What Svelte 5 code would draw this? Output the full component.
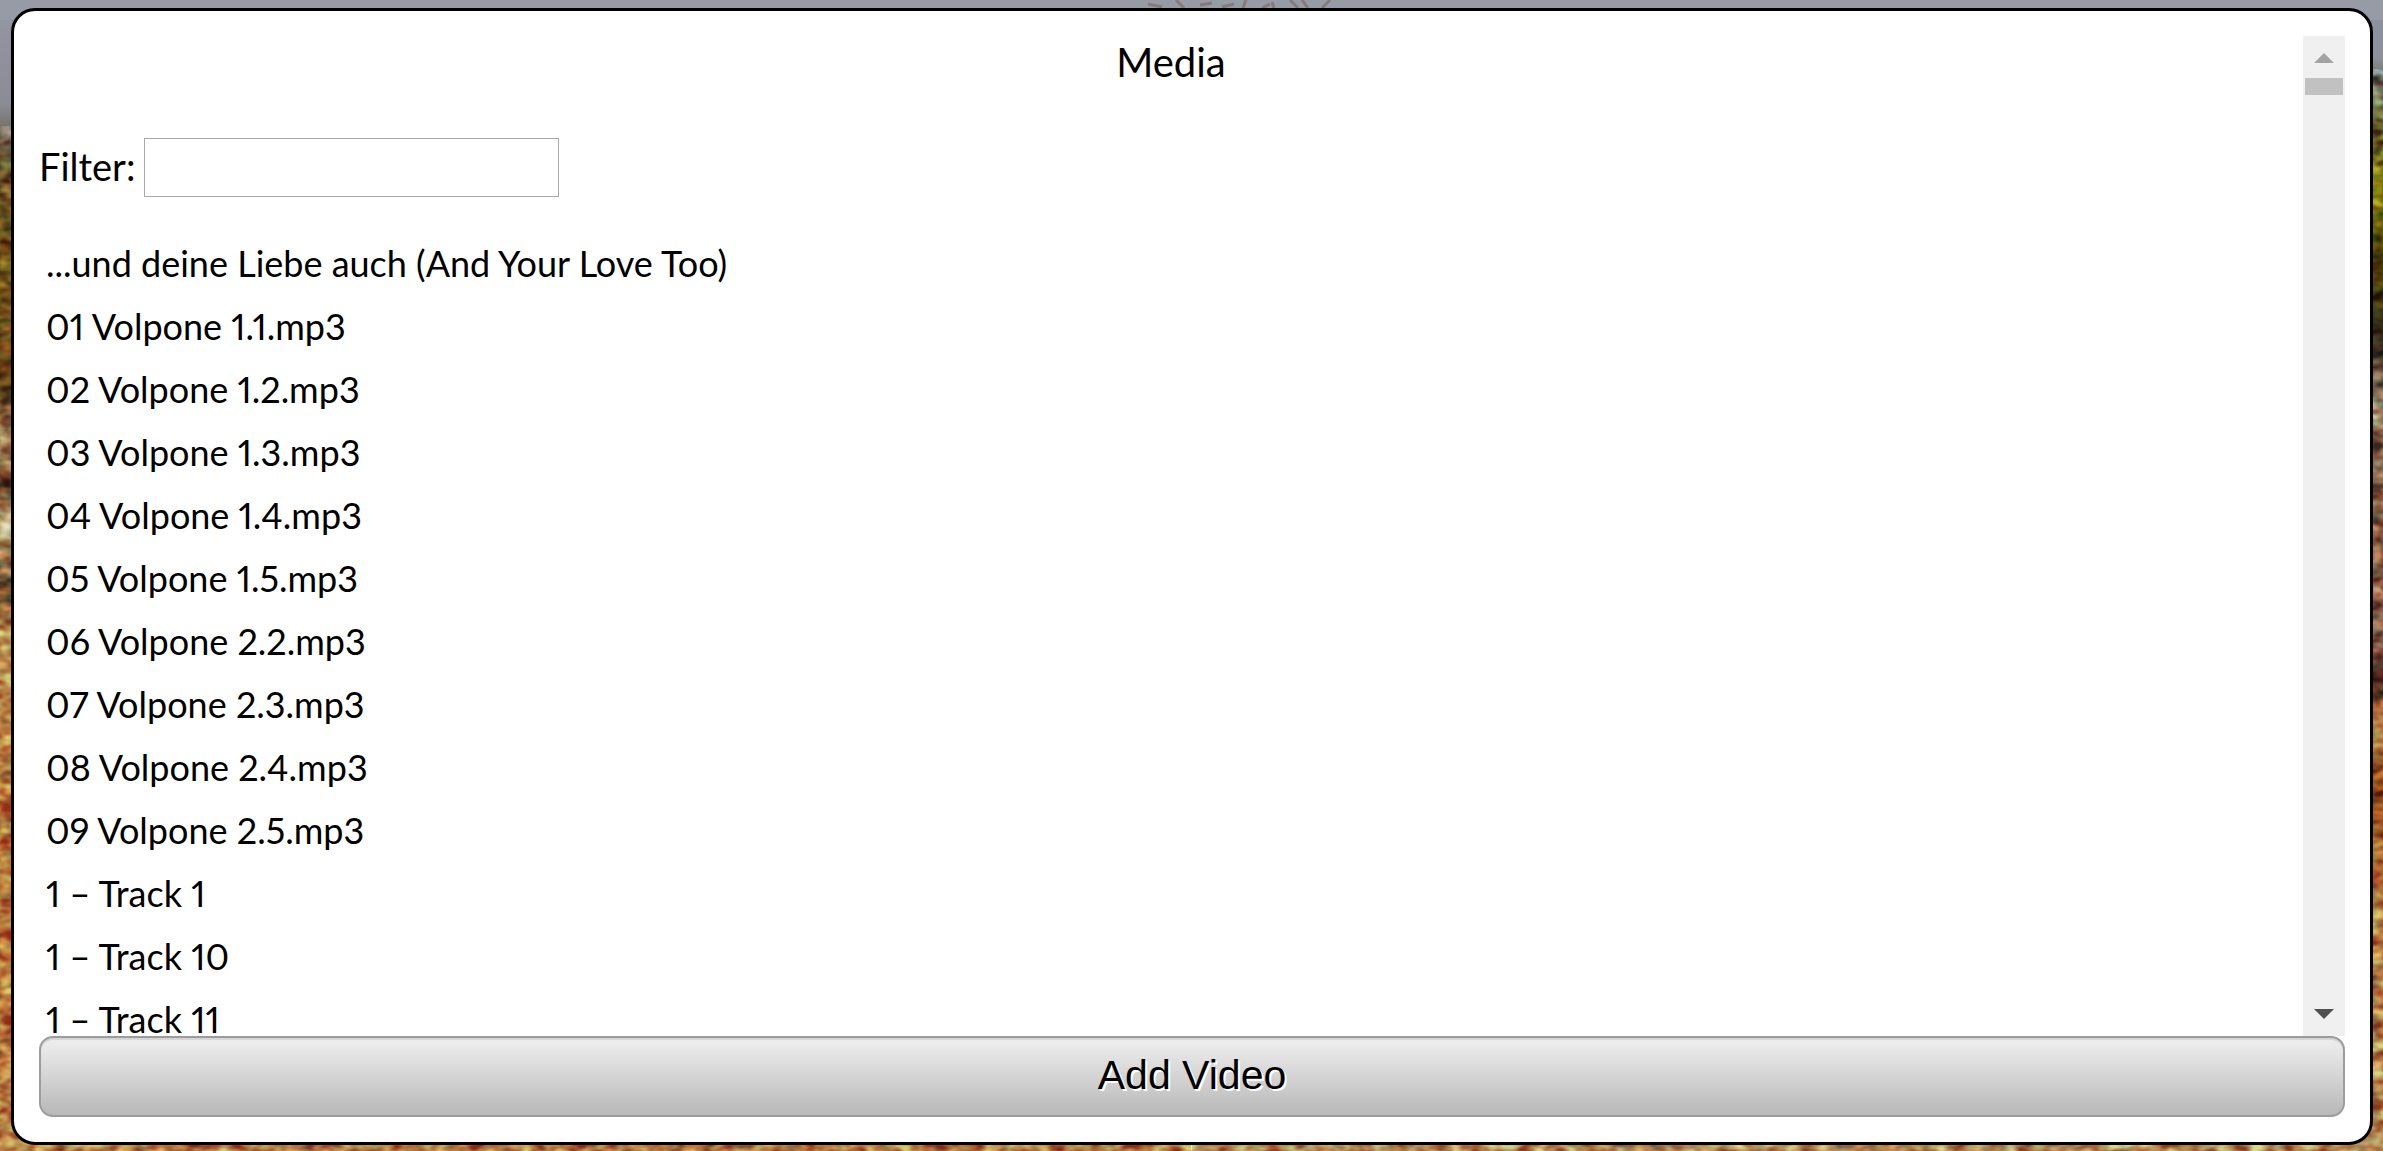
<script>
  const media = [
    '...und deine Liebe auch (And Your Love Too)',
    '01 Volpone 1.1.mp3',
    '02 Volpone 1.2.mp3',
    '03 Volpone 1.3.mp3',
    '04 Volpone 1.4.mp3',
    '05 Volpone 1.5.mp3',
    '06 Volpone 2.2.mp3',
    '07 Volpone 2.3.mp3',
    '08 Volpone 2.4.mp3',
    '09 Volpone 2.5.mp3',
    '1 – Track 1',
    '1 – Track 10',
    '1 – Track 11'
  ];

  let filter = $state('');
  let scroller;
  let shown = $derived(media.filter((name) => name.toLowerCase().includes(filter.toLowerCase())));

  function scroll(amount) {
    scroller.scrollBy({ top: amount });
  }
</script>

<svg class="backdrop" aria-hidden="true">
  <defs>
    <linearGradient id="left" x1="0" y1="0" x2="0" y2="1">
      <stop offset="0" stop-color="#9498a2" />
      <stop offset="0.09" stop-color="#8a8c96" />
      <stop offset="0.14" stop-color="#5c4c28" />
      <stop offset="0.22" stop-color="#70591a" />
      <stop offset="0.34" stop-color="#5c3c14" />
      <stop offset="0.38" stop-color="#b79b68" />
      <stop offset="0.42" stop-color="#5a3a20" />
      <stop offset="0.46" stop-color="#c0b078" />
      <stop offset="0.51" stop-color="#6a4828" />
      <stop offset="0.55" stop-color="#b88c4c" />
      <stop offset="0.75" stop-color="#b47838" />
      <stop offset="1" stop-color="#b07c42" />
    </linearGradient>
    <linearGradient id="right" x1="0" y1="0" x2="0" y2="1">
      <stop offset="0" stop-color="#8c919e" />
      <stop offset="0.05" stop-color="#8c919e" />
      <stop offset="0.07" stop-color="#6c7060" />
      <stop offset="0.11" stop-color="#60622c" />
      <stop offset="0.16" stop-color="#7a7a10" />
      <stop offset="0.22" stop-color="#4c4408" />
      <stop offset="0.3" stop-color="#2c2418" />
      <stop offset="0.35" stop-color="#8c7c60" />
      <stop offset="0.48" stop-color="#785038" />
      <stop offset="0.55" stop-color="#907058" />
      <stop offset="0.59" stop-color="#3c1c14" />
      <stop offset="0.62" stop-color="#b88850" />
      <stop offset="0.68" stop-color="#8c4818" />
      <stop offset="0.8" stop-color="#b07c40" />
      <stop offset="1" stop-color="#b08a54" />
    </linearGradient>
    <filter id="grain" x="0" y="0" width="100%" height="100%" color-interpolation-filters="sRGB">
      <feTurbulence type="fractalNoise" baseFrequency="0.06 0.1" numOctaves="2" seed="4" />
      <feColorMatrix values="1.6 0 0 0 -0.28  1.6 0.8 0 0 -0.72  1.6 0.9 0 0 -0.76  0 0 0 0 1" />
    </filter>
  </defs>
  <rect width="50%" height="100%" fill="url(#left)" />
  <rect x="50%" width="50%" height="100%" fill="url(#right)" />
  <rect width="100%" height="20" fill="#979ba5" />
  <rect class="grain" y="11%" width="50%" height="89%" filter="url(#grain)" />
  <rect class="grain" x="50%" y="6%" width="50%" height="94%" filter="url(#grain)" />
  <g fill="none" stroke="#806c6c" stroke-width="3" opacity="0.7">
    <path d="M1148 4l14 3M1176 0l8 8M1200 5l12-2M1222 7l12-3M1243 8l3-8M1262 8l8-4M1272 2l2 6M1290 0l8 8M1302 0l6 8M1322 8l8-8" />
  </g>
</svg>

<main class="panel">
  <div class="body">
    <div class="content" bind:this={scroller}>
      <h1>Media</h1>
      <div class="filter">
        <label for="filter">Filter:</label>
        <input id="filter" type="text" bind:value={filter} />
      </div>
      <ul>
        {#each shown as name}
          <li>{name}</li>
        {/each}
      </ul>
    </div>
    <div class="scrollbar">
      <button type="button" aria-label="Scroll up" onclick={() => scroll(-63)}>
        <svg class="up" viewBox="0 0 20 10"><path d="M0 10L10 0L20 10Z" /></svg>
      </button>
      <div class="track"><div class="thumb"></div></div>
      <button type="button" aria-label="Scroll down" onclick={() => scroll(63)}>
        <svg class="down" viewBox="0 0 20 10"><path d="M0 0L10 10L20 0Z" /></svg>
      </button>
    </div>
  </div>
  <button class="add" type="button">Add Video</button>
</main>

<style>
  :global(body) {
    margin: 0;
    overflow: hidden;
  }

  .backdrop {
    position: fixed;
    inset: 0;
    width: 100%;
    height: 100%;
    z-index: -1;
  }

  .grain {
    mix-blend-mode: overlay;
    opacity: 0.65;
  }

  .panel {
    box-sizing: border-box;
    height: calc(100vh - 14px);
    margin: 8px 10px 6px 11px;
    padding: 25px;
    display: flex;
    flex-direction: column;
    border: 3px solid #000;
    border-radius: 24px;
    background: #fff;
    color: #000;
    font-family: Lato, sans-serif;
    font-size: 38px;
    font-variant-numeric: proportional-nums;
  }

  .body {
    flex: 1;
    min-height: 0;
    display: flex;
  }

  .content {
    flex: 1;
    overflow-y: auto;
    scrollbar-width: none;
  }

  h1 {
    margin: 0;
    font-size: 40px;
    font-weight: 400;
    line-height: 52px;
    text-align: center;
  }

  .filter {
    display: flex;
    align-items: center;
    gap: 9px;
    margin-top: 50px;
  }

  label {
    padding-bottom: 4px;
  }

  input {
    box-sizing: border-box;
    width: 415px;
    height: 59px;
    padding: 4px;
    border: 1px solid #a9a9a9;
    background: #fff;
    font: inherit;
  }

  ul {
    margin: 35px 0 0;
    padding: 0 7px;
    list-style: none;
    font-size: 36px;
  }

  li {
    line-height: 63px;
    white-space: nowrap;
  }

  .scrollbar {
    width: 42px;
    display: flex;
    flex-direction: column;
    background: #f0f0f0;
  }

  .scrollbar button {
    height: 42px;
    padding: 2px 0 0;
    border: 0;
    background: none;
    display: flex;
    align-items: center;
    justify-content: center;
  }

  .scrollbar button:last-child {
    padding: 0 0 2px;
  }

  .scrollbar svg {
    width: 20px;
    height: 10px;
  }

  .up {
    fill: #a3a3a3;
  }

  .down {
    fill: #505050;
  }

  .track {
    flex: 1;
    padding: 0 2px;
  }

  .thumb {
    height: 17px;
    background: #c1c1c1;
  }

  .add {
    box-sizing: border-box;
    height: 81px;
    padding: 0 0 2px;
    border: 2px solid #9c9c9c;
    border-radius: 14px;
    background: linear-gradient(#f0f0f0, #b8b8b8);
    box-shadow: inset 0 2px 1px #d4d4d4;
    color: #000;
    font-family: "Liberation Sans", Arial, sans-serif;
    font-size: 41px;
    text-shadow: 2px 2px 0 #fff;
  }
</style>
